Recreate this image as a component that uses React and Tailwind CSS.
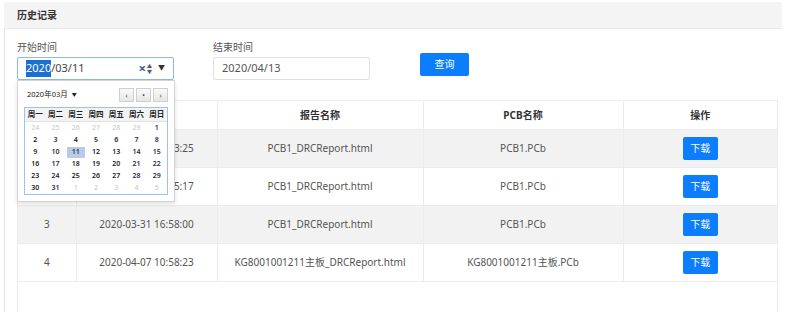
import { useState } from 'react'

const font = { fontFamily: '"Noto Sans", "Noto Sans CJK SC", sans-serif' }

const rows = [
  { id: 1, time: '2020-03-11 13:13:25', report: 'PCB1_DRCReport.html', pcb: 'PCB1.PCb' },
  { id: 2, time: '2020-03-11 15:45:17', report: 'PCB1_DRCReport.html', pcb: 'PCB1.PCb' },
  { id: 3, time: '2020-03-31 16:58:00', report: 'PCB1_DRCReport.html', pcb: 'PCB1.PCb' },
  { id: 4, time: '2020-04-07 10:58:23', report: 'KG8001001211主板_DRCReport.html', pcb: 'KG8001001211主板.PCb' },
]

const weekdays = ['周一', '周二', '周三', '周四', '周五', '周六', '周日']

// March 2020 grid, Monday first
const days = [
  [24, 25, 26, 27, 28, 29, 1],
  [2, 3, 4, 5, 6, 7, 8],
  [9, 10, 11, 12, 13, 14, 15],
  [16, 17, 18, 19, 20, 21, 22],
  [23, 24, 25, 26, 27, 28, 29],
  [30, 31, 1, 2, 3, 4, 5],
]

function DatePicker() {
  return (
    <div className="absolute left-0 top-[40px] z-10 h-[122px] w-[158px] border border-[#d4d4d4] bg-white shadow-[0_2px_4px_rgba(0,0,0,0.12)]">
      <div className="flex h-[26px] items-center justify-between pl-[9px] pr-[6px] pt-[2px]">
        <span className="flex items-center gap-[4px] text-[7.5px] text-[#222]">
          2020年03月
          <span className="text-[5px]">▼</span>
        </span>
        <div className="flex gap-[2px]">
          {['‹', '•', '›'].map((g) => (
            <span
              key={g}
              className="flex h-[14px] w-[15px] items-center justify-center border border-[#cfcfcf] bg-gradient-to-b from-[#fafafa] to-[#e6e6e6] text-[7px] leading-none text-[#444]"
            >
              {g}
            </span>
          ))}
        </div>
      </div>
      <div className="mx-[6px] border border-[#9ec0f5]">
        <div className="grid h-[14px] grid-cols-7 items-center border-b border-[#e2e2e2] bg-[#f3f3f3] text-center text-[7.5px] font-bold text-[#222]">
          {weekdays.map((w) => (
            <span key={w}>{w}</span>
          ))}
        </div>
        {days.map((week, wi) => (
          <div key={wi} className="grid h-[12px] grid-cols-7 items-center text-center text-[7px] font-semibold">
            {week.map((d, di) => {
              const outside = (wi === 0 && d > 20) || (wi === 5 && d < 10)
              const selected = wi === 2 && d === 11
              return (
                <span
                  key={di}
                  className={
                    selected
                      ? 'mx-[1px] flex h-[11px] items-center justify-center bg-[#b8cbe9] text-[#333]'
                      : outside
                        ? 'font-normal text-[#c4c4c4]'
                        : di === 1 || di >= 5
                          ? 'text-[#2e2a4a]'
                          : 'text-[#222]'
                  }
                >
                  {d}
                </span>
              )
            })}
          </div>
        ))}
      </div>
    </div>
  )
}

export default function App() {
  const [start] = useState('2020/03/11')
  const [end] = useState('2020/04/13')

  return (
    <div className="h-[330px] w-[807px] bg-white pt-[2px] pl-[4px]" style={font}>
      <div className="w-[778px]">
        <div className="flex h-[27px] items-center border-b border-[#e8e8e8] bg-[#f4f4f4] pl-[13px] text-[10px] font-bold text-[#333]">
          历史记录
        </div>
        <div className="h-[283px] border-l border-[#e4e4ec] pl-[12px] pt-[11px]">
          <div className="flex items-start">
            <div className="relative">
              <div className="mb-[3px] h-[14px] text-[10px] leading-[14px] text-[#555]">开始时间</div>
              <div className="flex h-[23px] w-[157px] items-center rounded-[2px] border border-[#8cb8ef] pl-[8px] pr-[8px] text-[11px] text-[#444]">
                <span className="bg-[#1a6fd1] text-white">{start.slice(0, 4)}</span>
                <span>{start.slice(4)}</span>
                <span className="ml-auto text-[13px] font-bold leading-none text-[#2a5ea8]">×</span>
                <span className="ml-[1px] flex flex-col bg-[#f0f0f0] text-[5px] leading-[5px] text-[#555]">
                  <span>▲</span>
                  <span>▼</span>
                </span>
                <span className="ml-[6px] text-[7px] text-[#333]">▼</span>
              </div>
              <DatePicker />
            </div>
            <div className="ml-[39px]">
              <div className="mb-[3px] h-[14px] text-[10px] leading-[14px] text-[#555]">结束时间</div>
              <div className="flex h-[23px] w-[157px] items-center rounded-[2px] border border-[#e0e0e0] pl-[8px] text-[11px] text-[#555]">
                {end}
              </div>
            </div>
            <button className="ml-[50px] mt-[13px] h-[23px] w-[49px] rounded-[2px] bg-[#0b7dfd] text-[10px] text-white">
              查询
            </button>
          </div>

          <div className="mt-[20px] h-[212px] w-[761px] border-x border-[#ececec]">
            <table className="w-full border-collapse text-center text-[10px] text-[#555]">
              <colgroup>
                <col className="w-[58px]" />
                <col className="w-[141px]" />
                <col className="w-[206px]" />
                <col className="w-[200px]" />
                <col />
              </colgroup>
              <thead>
                <tr className="h-[29px] border-y border-[#ececec] font-bold text-[#333]">
                  <th className="border-r border-[#ececec]">序号</th>
                  <th className="border-r border-[#ececec]">上传时间</th>
                  <th className="border-r border-[#ececec]">报告名称</th>
                  <th className="border-r border-[#ececec]">PCB名称</th>
                  <th>操作</th>
                </tr>
              </thead>
              <tbody>
                {rows.map((r, i) => (
                  <tr key={r.id} className={`h-[38px] border-b border-[#ececec] ${i % 2 === 0 ? 'bg-[#f2f2f2]' : 'bg-white'}`}>
                    <td className="border-r border-[#ececec]">{r.id}</td>
                    <td className="border-r border-[#ececec]">{r.time}</td>
                    <td className="border-r border-[#ececec]">{r.report}</td>
                    <td className="border-r border-[#ececec]">{r.pcb}</td>
                    <td>
                      <button className="h-[23px] w-[35px] rounded-[2px] bg-[#0b7dfd] text-[10px] text-white">下载</button>
                    </td>
                  </tr>
                ))}
              </tbody>
            </table>
          </div>
        </div>
      </div>
    </div>
  )
}
